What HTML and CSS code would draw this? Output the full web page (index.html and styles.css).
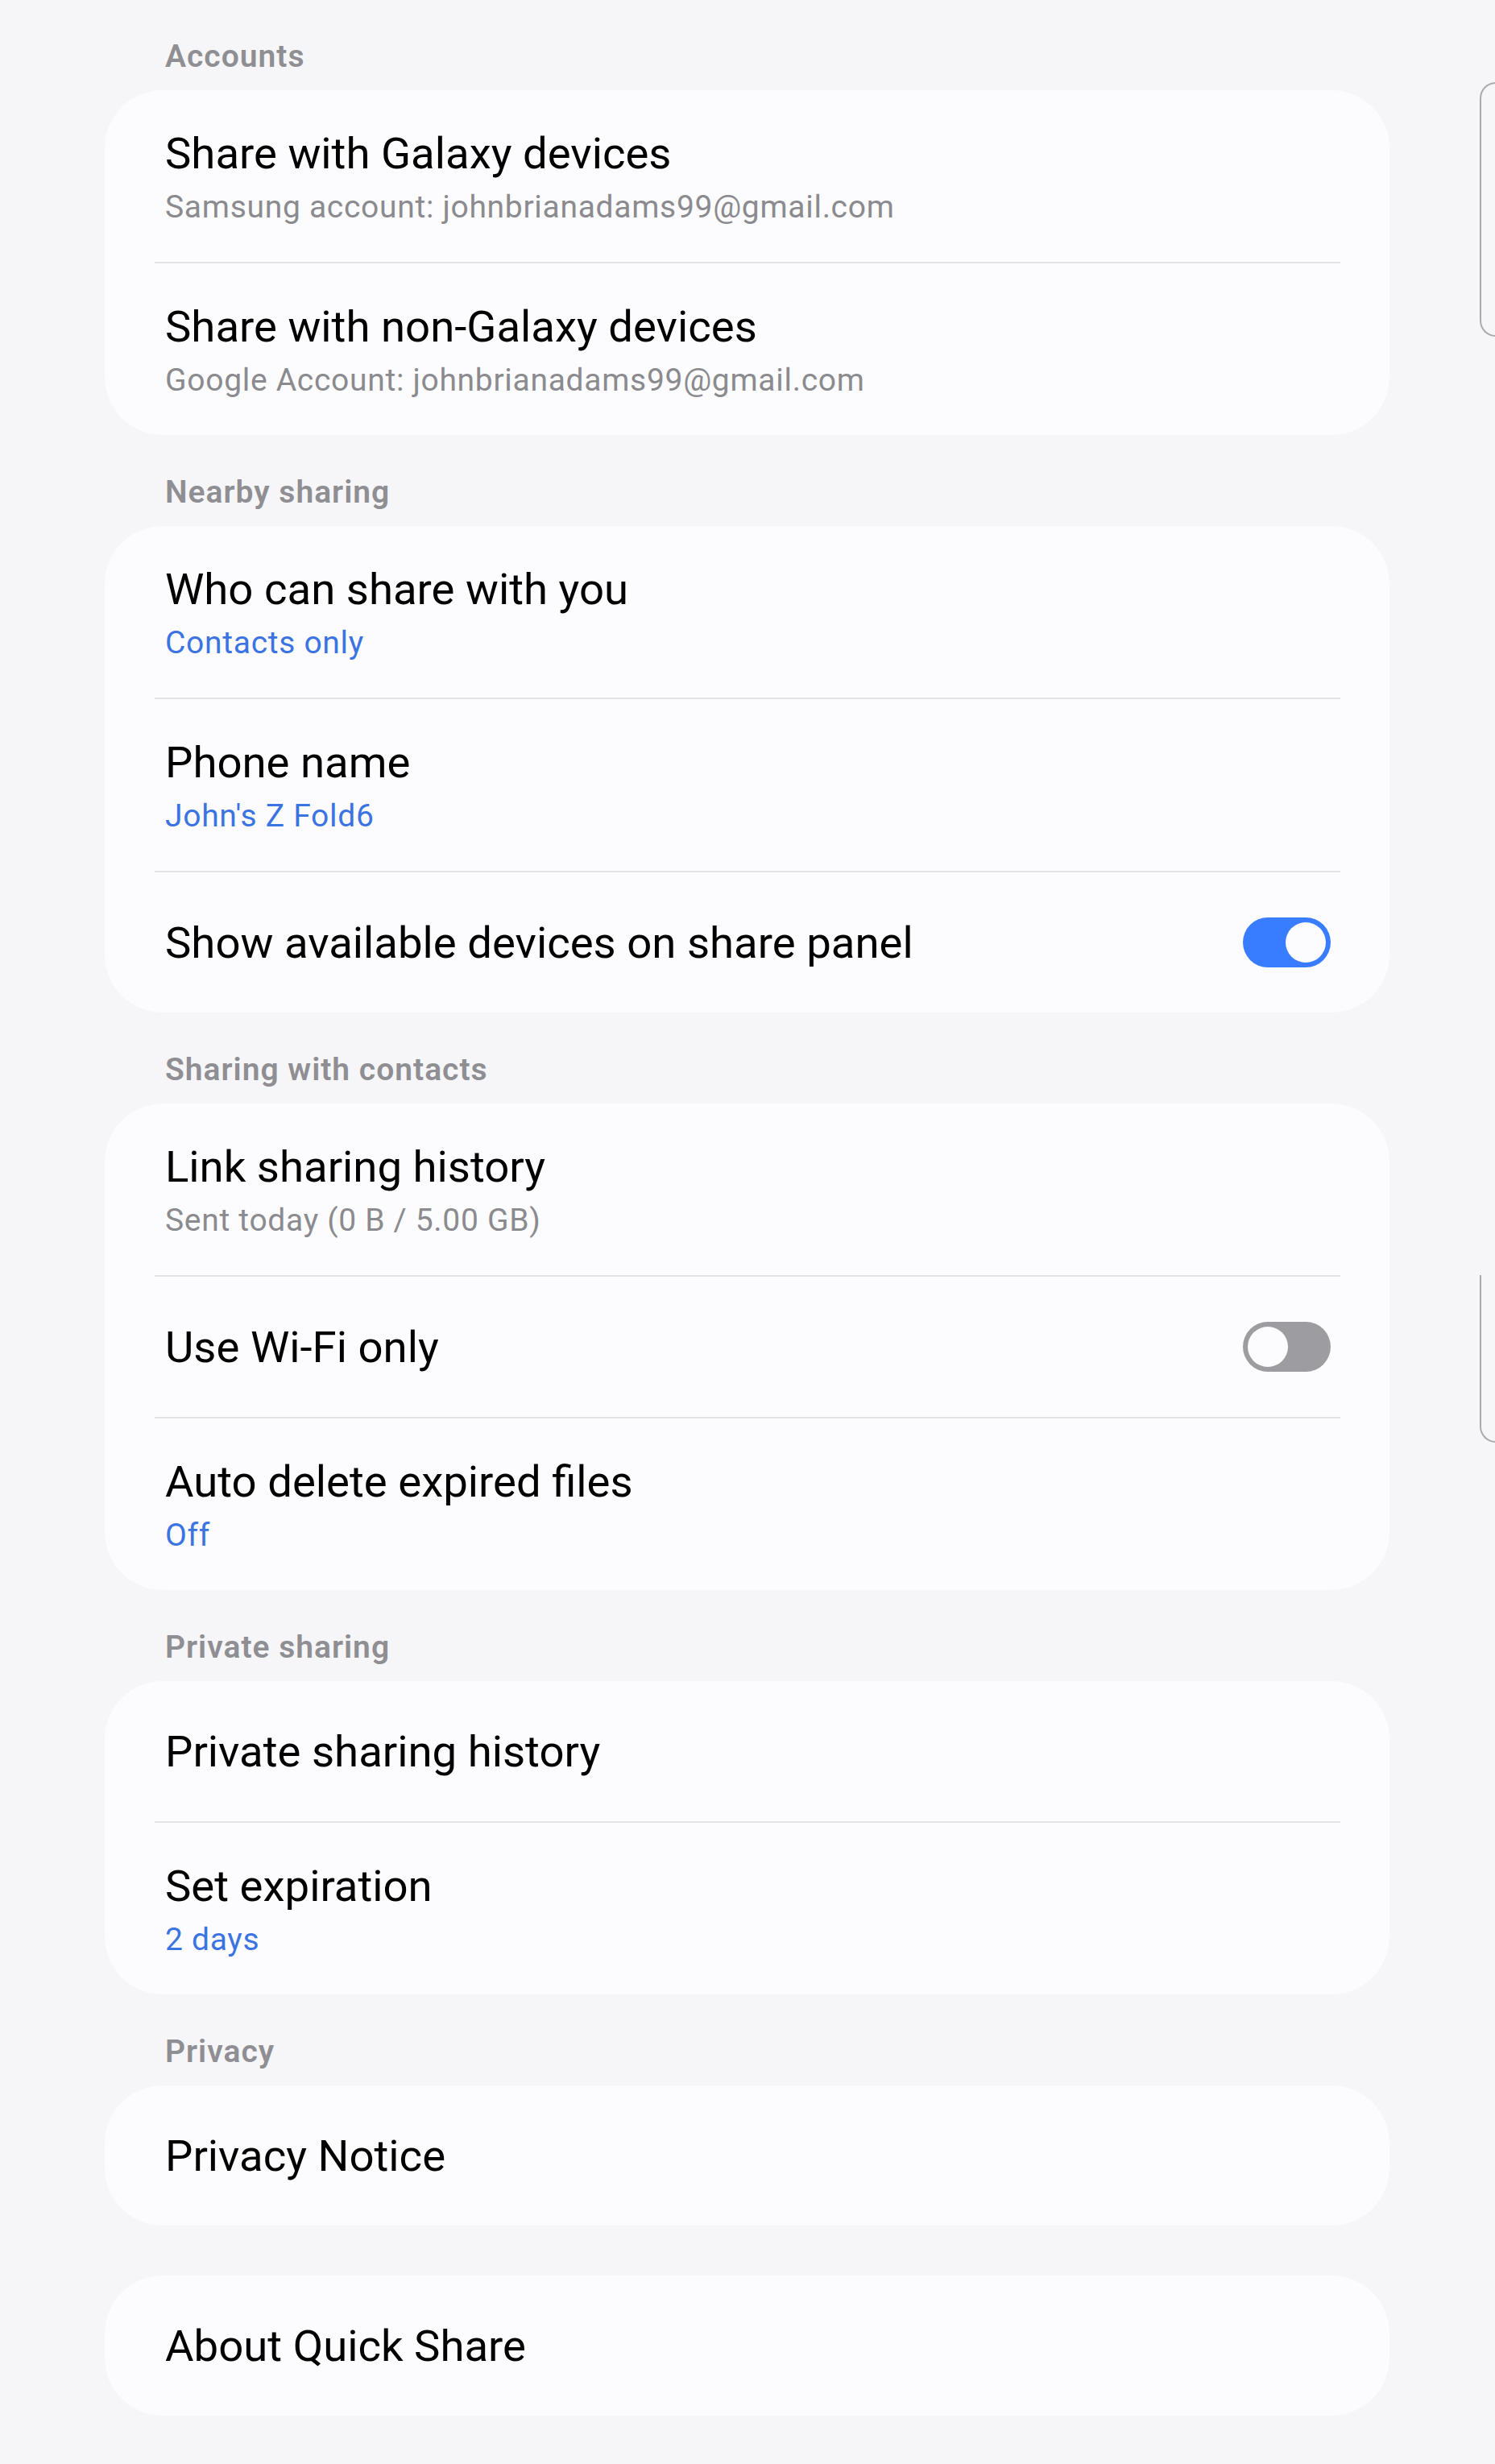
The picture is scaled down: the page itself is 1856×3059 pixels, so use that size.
FILE: index.html
```html
<!DOCTYPE html>
<html lang="en">
<head>
<meta charset="utf-8">
<title>Quick Share settings</title>
<link rel="stylesheet" href="styles.css">
</head>
<body>
<main class="page">
  <h2 class="section-title">Accounts</h2>
  <section class="card">
    <div class="row two">
      <div class="texts">
        <div class="title">Share with Galaxy devices</div>
        <div class="sub">Samsung account: johnbrianadams99@gmail.com</div>
      </div>
    </div>
    <div class="divider"></div>
    <div class="row two">
      <div class="texts">
        <div class="title">Share with non-Galaxy devices</div>
        <div class="sub">Google Account: johnbrianadams99@gmail.com</div>
      </div>
    </div>
  </section>

  <h2 class="section-title">Nearby sharing</h2>
  <section class="card">
    <div class="row two">
      <div class="texts">
        <div class="title">Who can share with you</div>
        <div class="sub blue">Contacts only</div>
      </div>
    </div>
    <div class="divider"></div>
    <div class="row two">
      <div class="texts">
        <div class="title">Phone name</div>
        <div class="sub blue">John's Z Fold6</div>
      </div>
    </div>
    <div class="divider"></div>
    <div class="row one">
      <div class="texts">
        <div class="title">Show available devices on share panel</div>
      </div>
      <div class="switch on"><span class="knob"></span></div>
    </div>
  </section>

  <h2 class="section-title">Sharing with contacts</h2>
  <section class="card">
    <div class="row two">
      <div class="texts">
        <div class="title">Link sharing history</div>
        <div class="sub">Sent today (0 B / 5.00 GB)</div>
      </div>
    </div>
    <div class="divider"></div>
    <div class="row one">
      <div class="texts">
        <div class="title">Use Wi-Fi only</div>
      </div>
      <div class="switch off"><span class="knob"></span></div>
    </div>
    <div class="divider"></div>
    <div class="row two">
      <div class="texts">
        <div class="title">Auto delete expired files</div>
        <div class="sub blue">Off</div>
      </div>
    </div>
  </section>

  <h2 class="section-title">Private sharing</h2>
  <section class="card">
    <div class="row one">
      <div class="texts">
        <div class="title">Private sharing history</div>
      </div>
    </div>
    <div class="divider"></div>
    <div class="row two">
      <div class="texts">
        <div class="title">Set expiration</div>
        <div class="sub blue">2 days</div>
      </div>
    </div>
  </section>

  <h2 class="section-title">Privacy</h2>
  <section class="card">
    <div class="row one">
      <div class="texts">
        <div class="title">Privacy Notice</div>
      </div>
    </div>
  </section>

  <section class="card card-gap">
    <div class="row one">
      <div class="texts">
        <div class="title">About Quick Share</div>
      </div>
    </div>
  </section>
</main>
<div class="edge-handle edge-top"></div>
<div class="edge-handle edge-mid"></div>
</body>
</html>
```

FILE: styles.css
```css
html, body {
  margin: 0;
  padding: 0;
  background: #f6f6f8;
}

body {
  font-family: Roboto, "Liberation Sans", Arial, sans-serif;
  color: #000;
  position: relative;
  overflow: hidden;
}

.page {
  width: 1595px;
  padding: 45px 0 63px 130px;
  display: flex;
  flex-direction: column;
}

.section-title {
  margin: 46px 0 17px 0;
  padding-left: 75px;
  font-size: 39px;
  line-height: 50px;
  font-weight: 600;
  letter-spacing: 1px;
  color: #8e8e93;
}

.section-title:first-child {
  margin-top: 0;
}

.card {
  background: #fcfcfe;
  border-radius: 72px;
  display: flex;
  flex-direction: column;
}

.card-gap {
  margin-top: 62px;
}

.row {
  display: flex;
  align-items: center;
  justify-content: space-between;
  padding-left: 75px;
  padding-right: 73px;
}

.row.two {
  padding-top: 46px;
  padding-bottom: 43px;
}

.row.one {
  padding-top: 55px;
  padding-bottom: 55px;
}

.texts {
  display: flex;
  flex-direction: column;
}

.title {
  font-size: 54.5px;
  line-height: 64px;
  color: #000;
}

.sub {
  margin-top: 10px;
  font-size: 39px;
  line-height: 50px;
  letter-spacing: 0.7px;
  color: #8b8b8f;
}

.sub.blue {
  color: #3b74e2;
}

.divider {
  height: 2px;
  background: #e3e3e5;
  margin: 0 61px 0 62px;
}

.switch {
  width: 109px;
  height: 62px;
  border-radius: 31px;
  position: relative;
  flex: none;
}

.switch.on {
  background: #387cff;
}

.switch.off {
  background: #9d9da1;
}

.knob {
  position: absolute;
  top: 6px;
  width: 50px;
  height: 50px;
  border-radius: 50%;
  background: #fcfcfe;
}

.switch.on .knob {
  right: 6px;
}

.switch.off .knob {
  left: 6px;
}

.edge-handle {
  position: absolute;
  left: 1837px;
  width: 40px;
  border: 2px solid #ababab;
  border-right: none;
}

.edge-top {
  top: 102px;
  height: 312px;
  border-radius: 20px 0 0 20px;
}

.edge-mid {
  top: 1583px;
  height: 206px;
  border-top: none;
  border-radius: 0 0 0 20px;
}
```
